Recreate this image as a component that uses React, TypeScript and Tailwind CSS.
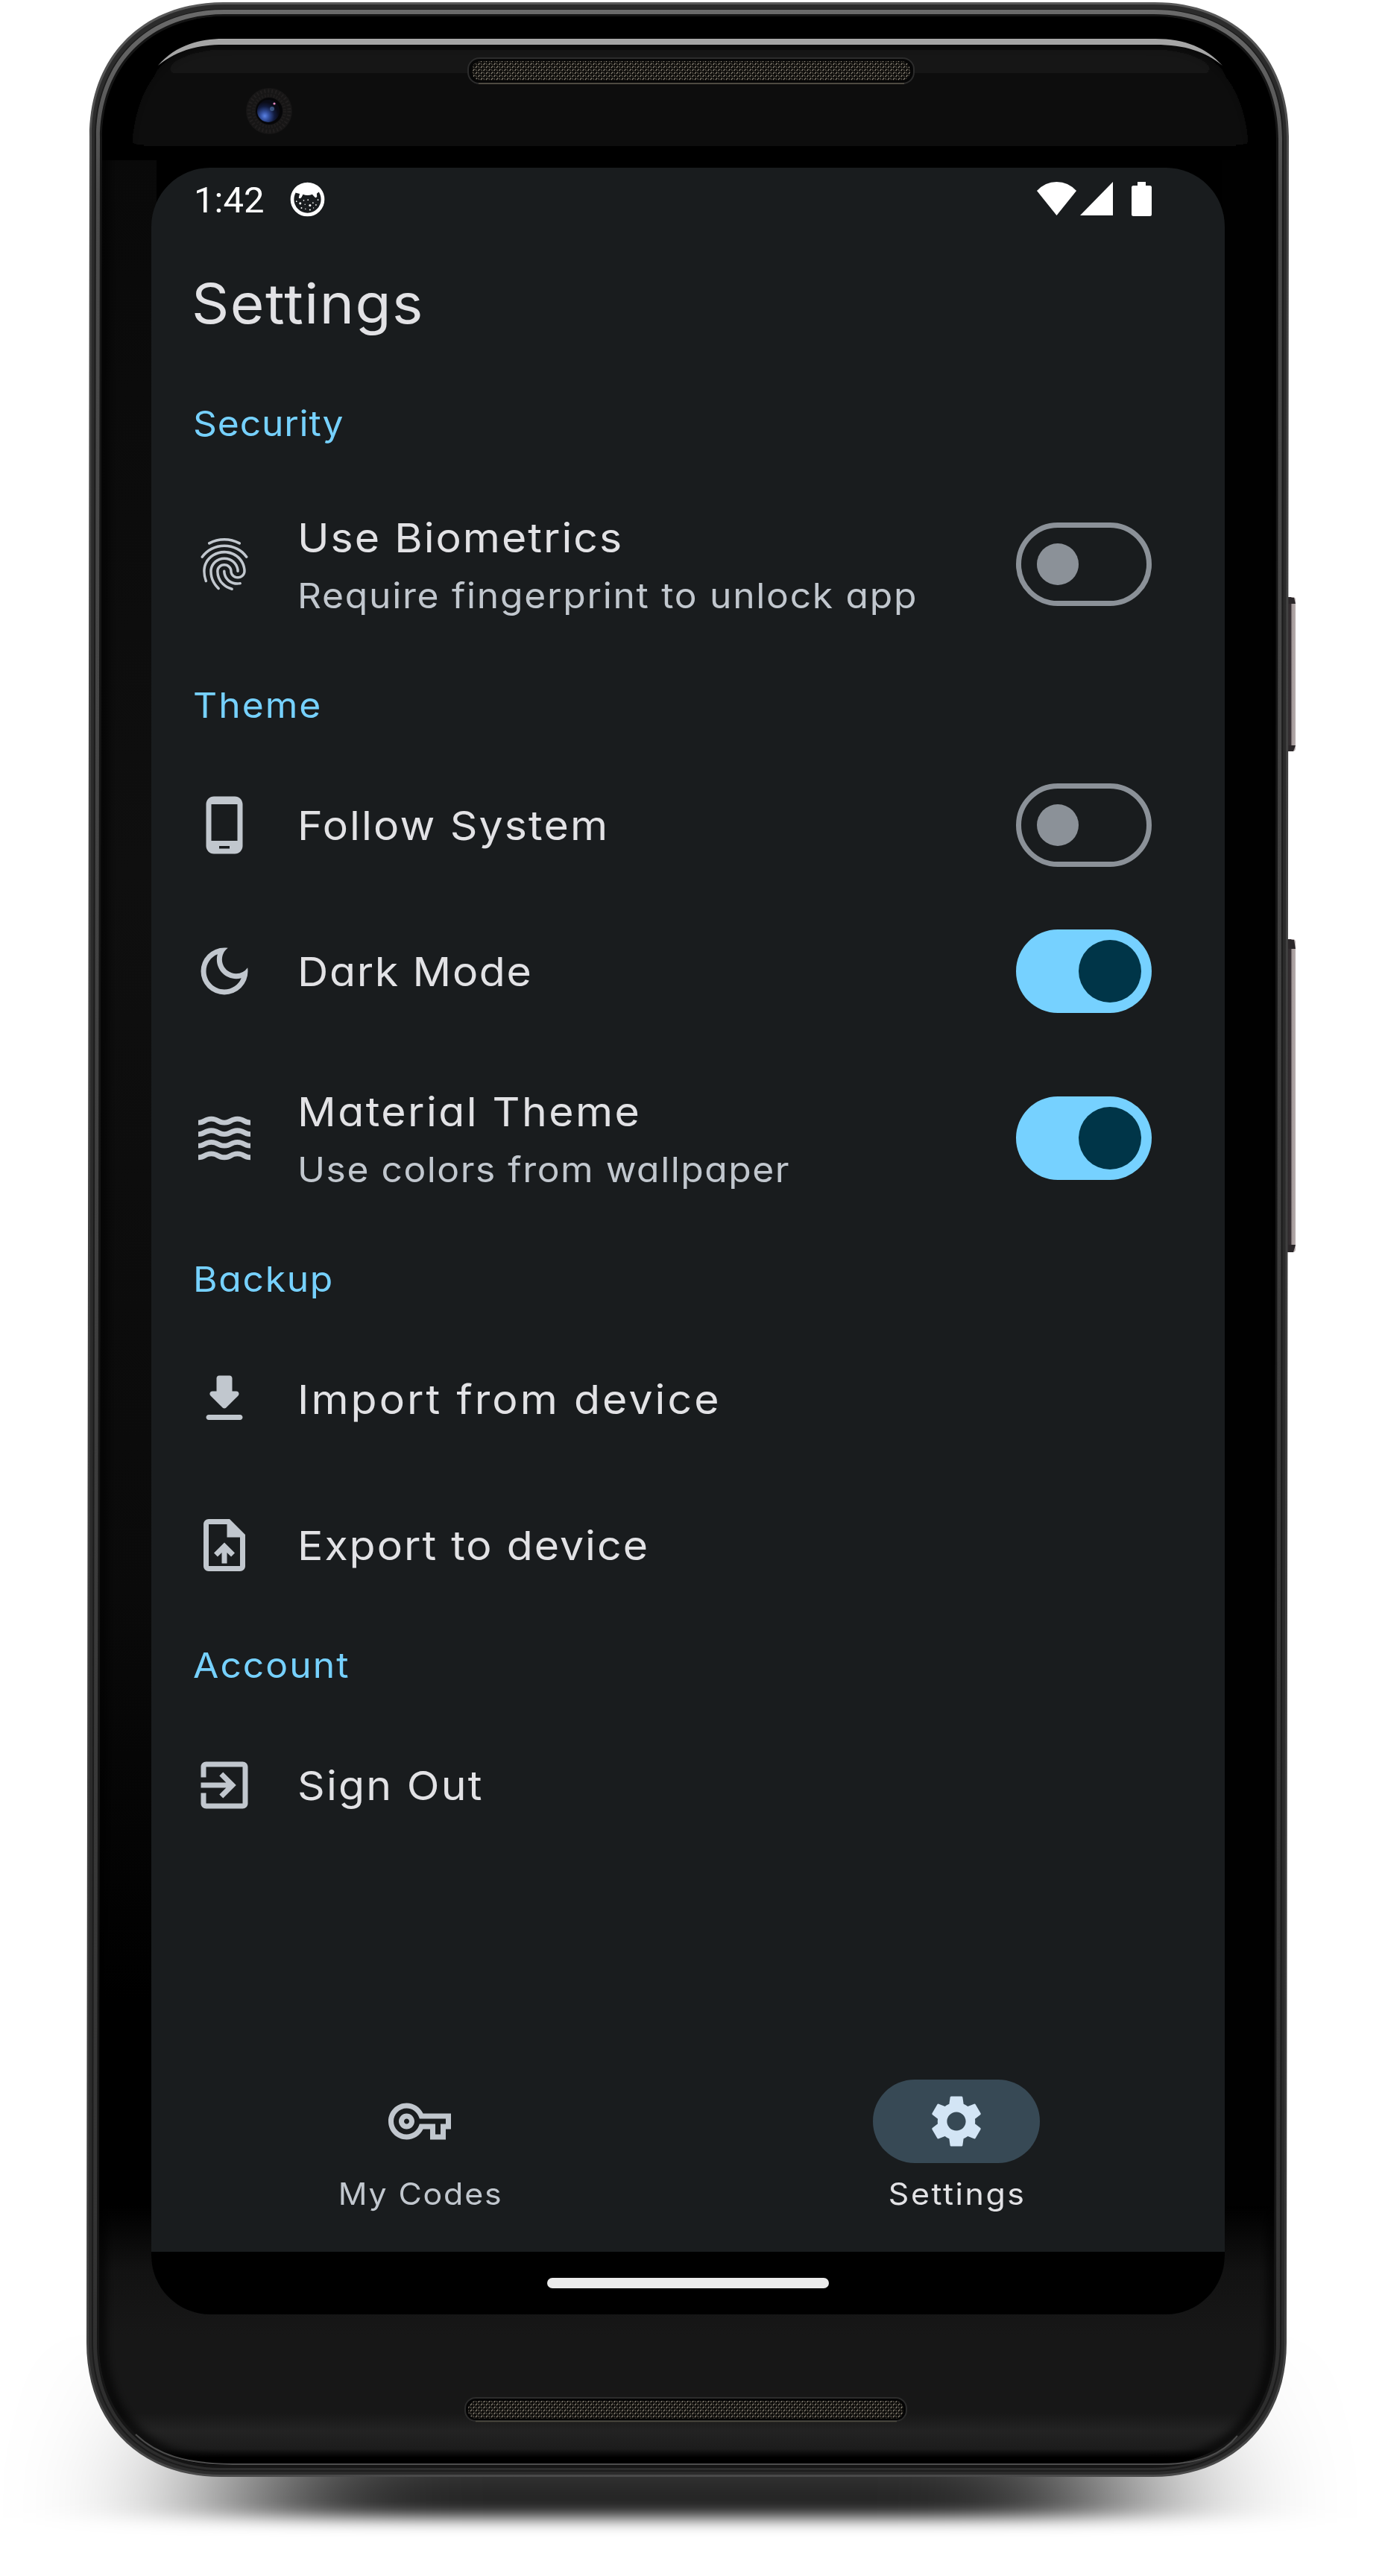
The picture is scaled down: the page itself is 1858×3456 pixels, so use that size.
import type { ReactNode } from "react";
import { MdFingerprint, MdOutlineDarkMode, MdSettings, MdWaves } from "react-icons/md";

const body = (inset: number, insetTop = inset, insetBottom = inset) => {
  const l = 120 + inset;
  const lb = 116 + inset;
  const r = 1729 - inset;
  const rb = 1726 - inset;
  const t = 3 + insetTop;
  const b = 3323 - insetBottom;
  const c = 180 - inset * 0.9;
  const k = c * 0.4;
  return `M${l} ${t + c} C${l} ${t + k} ${l + k} ${t} ${l + c} ${t} H${r - c} C${r - k} ${t} ${r} ${t + k} ${r} ${t + c} L${rb} ${b - c} C${rb} ${b - k} ${rb - k} ${b} ${rb - c} ${b} H${lb + c} C${lb + k} ${b} ${lb} ${b - k} ${lb} ${b - c} Z`;
};

function DeviceFrame() {
  return (
    <svg className="absolute inset-0" width="1858" height="3456" viewBox="0 0 1858 3456" aria-hidden="true">
      <defs>
        <filter id="ground" x="-100" y="3000" width="2100" height="456" filterUnits="userSpaceOnUse">
          <feGaussianBlur stdDeviation="135 11" />
        </filter>
        <filter id="soft" x="-20%" y="-20%" width="140%" height="140%">
          <feGaussianBlur stdDeviation="7" />
        </filter>
        <linearGradient id="groundFill" gradientUnits="userSpaceOnUse" x1="0" y1="3120" x2="0" y2="3350">
          <stop offset="0" stopColor="#000" stopOpacity="0" />
          <stop offset="0.5" stopColor="#000" stopOpacity="0.4" />
          <stop offset="0.85" stopColor="#000" stopOpacity="0.8" />
          <stop offset="1" stopColor="#000" stopOpacity="0.86" />
        </linearGradient>
        <linearGradient id="rim" gradientUnits="userSpaceOnUse" x1="0" y1="0" x2="0" y2="3323">
          <stop offset="0" stopColor="#5a5a5a" />
          <stop offset="0.1" stopColor="#444" />
          <stop offset="0.9" stopColor="#3a3a3a" />
          <stop offset="1" stopColor="#4a4a4a" />
        </linearGradient>
        <linearGradient id="texture" gradientUnits="userSpaceOnUse" x1="0" y1="0" x2="0" y2="3323">
          <stop offset="0" stopColor="#6c6c6c" />
          <stop offset="0.08" stopColor="#4a4a4a" />
          <stop offset="0.9" stopColor="#333" />
          <stop offset="1" stopColor="#2c2c2c" />
        </linearGradient>
        <linearGradient id="glassTop" gradientUnits="userSpaceOnUse" x1="0" y1="60" x2="0" y2="216">
          <stop offset="0" stopColor="#151515" />
          <stop offset="0.4" stopColor="#0f0f0f" />
          <stop offset="1" stopColor="#040404" />
        </linearGradient>
        <linearGradient id="leftStrip" gradientUnits="userSpaceOnUse" x1="0" y1="215" x2="0" y2="2960">
          <stop offset="0" stopColor="#090909" />
          <stop offset="0.35" stopColor="#0f0f0f" />
          <stop offset="0.7" stopColor="#0a0a0a" />
          <stop offset="0.9" stopColor="#000" />
        </linearGradient>
        <linearGradient id="glassBottom" gradientUnits="userSpaceOnUse" x1="0" y1="2960" x2="0" y2="3306">
          <stop offset="0" stopColor="#000" />
          <stop offset="0.25" stopColor="#121212" />
          <stop offset="0.5" stopColor="#171717" />
          <stop offset="0.8" stopColor="#171717" />
          <stop offset="0.87" stopColor="#232323" />
          <stop offset="0.94" stopColor="#1c1c1c" />
          <stop offset="0.975" stopColor="#000" />
        </linearGradient>
        <linearGradient id="button" x1="0" y1="0" x2="1" y2="0">
          <stop offset="0" stopColor="#222" />
          <stop offset="0.55" stopColor="#3a3236" />
          <stop offset="0.65" stopColor="#a39999" />
          <stop offset="1" stopColor="#b8aeae" />
        </linearGradient>
        <radialGradient id="lens" cx="0.34" cy="0.72" r="0.62">
          <stop offset="0" stopColor="#5a82e6" />
          <stop offset="0.3" stopColor="#34509e" />
          <stop offset="0.7" stopColor="#111a3c" />
          <stop offset="1" stopColor="#0a0b16" />
        </radialGradient>
        <pattern id="mesh" width="7" height="8" patternUnits="userSpaceOnUse">
          <rect width="7" height="8" fill="#0d0c0a" />
          <path d="M1 3.2 3 .6M4.6 7.2 6.4 4.6" stroke="#938c7e" strokeWidth="1.2" />
          <path d="M4.4 .8 6 3M.8 4.8 2.6 7.2" stroke="#4e4a42" strokeWidth="1.3" />
        </pattern>
        <clipPath id="glass">
          <path d={body(17, 19, 16)} />
        </clipPath>
      </defs>

      <rect x="325" y="3120" width="1175" height="258" fill="url(#groundFill)" filter="url(#ground)" />

      <rect x="1724" y="801" width="14" height="207" rx="4" fill="url(#button)" />
      <rect x="1724" y="1260" width="14" height="420" rx="4" fill="url(#button)" />
      <path d="M1728 802h8l2 8h-10zM1728 1000h10l-3 8h-7zM1728 1261h8l2 12h-10zM1728 1670h10l-3 10h-7z" fill="#2b2729" />

      <path d={body(0)} fill="url(#rim)" />
      <path d={body(3)} fill="#2b2b2b" />
      <path d={body(7, 9, 7)} fill="#1c1c1c" />
      <path d={body(9, 10, 9)} fill="url(#texture)" />
      <path d={body(14, 16, 12)} fill="#151515" />
      <path d={body(17, 19, 16)} fill="#000" />

      <g clipPath="url(#glass)">
        <path d="M176 270V200C182 120 215 62 300 62H1550C1635 62 1670 120 1676 200V270Z" fill="url(#glassTop)" filter="url(#soft)" />
        <rect x="130" y="215" width="80" height="2745" fill="url(#leftStrip)" />
        <rect x="1640" y="215" width="90" height="2745" fill="#010101" />
        <rect x="110" y="2960" width="1630" height="350" fill="url(#glassBottom)" />
        <path d={body(19, 0, 18)} fill="none" stroke="#050505" strokeWidth="10" filter="url(#soft)" />
        <rect x="260" y="20" width="1320" height="33" fill="#000" />
      </g>
      <path d="M182 3266C210 3293 250 3306 312 3306H1558C1610 3306 1640 3292 1660 3268" fill="none" stroke="#4d4d4d" strokeWidth="2" />
      <path d="M212 88C232 64 262 52 300 52H1550C1590 52 1618 64 1640 88C1616 69 1590 60 1550 60H300C262 60 236 69 212 88Z" fill="#a6a6a6" />

      <circle cx="361" cy="149" r="31" fill="#171616" />
      <circle cx="361" cy="149" r="27" fill="none" stroke="#211f1f" strokeWidth="5" strokeDasharray="2 3" />
      <circle cx="361" cy="149" r="21" fill="none" stroke="#1f1d1d" strokeWidth="4" strokeDasharray="2 2" />
      <circle cx="361" cy="149" r="18" fill="#060608" />
      <circle cx="360" cy="149" r="15" fill="url(#lens)" />
      <circle cx="365" cy="146" r="3" fill="#4a6a9a" opacity="0.7" />
      <circle cx="368" cy="139" r="1.6" fill="#e58ac0" />

      <rect x="628" y="78" width="598" height="34" rx="15" fill="#070707" stroke="#2c2c2c" strokeWidth="2" />
      <path d="M642 112H1213" stroke="#5a5548" strokeWidth="1.5" />
      <rect x="633" y="82" width="588" height="26" rx="12" fill="url(#mesh)" />
      <rect x="624" y="3217" width="592" height="31" rx="14" fill="#050505" stroke="#2c2c2c" strokeWidth="2" />
      <path d="M638 3248.500H1203" stroke="#4e4b40" strokeWidth="1.5" />
      <rect x="628" y="3221" width="584" height="24" rx="11" fill="url(#mesh)" />
    </svg>
  );
}

const Icon = ({ d }: { d: string }) => (
  <svg viewBox="0 0 24 24" className="size-[84px]" fill="currentColor" aria-hidden="true">
    <path d={d} />
  </svg>
);

const PHONE = "M16 1H8C6.34 1 5 2.34 5 4v16c0 1.66 1.34 3 3 3h8c1.66 0 3-1.34 3-3V4c0-1.66-1.34-3-3-3zm1 17H7V4h10v14zm-3 3h-4v-1h4v1z";
const DOWNLOAD = "M16.59 9H15V4c0-.55-.45-1-1-1h-4c-.55 0-1 .45-1 1v5H7.41c-.89 0-1.34 1.08-.71 1.71l4.59 4.59c.39.39 1.02.39 1.41 0l4.59-4.59c.63-.63.19-1.71-.7-1.71zM5 19c0 .55.45 1 1 1h12c.55 0 1-.45 1-1s-.45-1-1-1H6c-.55 0-1 .45-1 1z";
const UPLOAD_FILE = "M14 2H6c-1.1 0-1.99.9-1.99 2L4 20c0 1.1.89 2 1.99 2H18c1.1 0 2-.9 2-2V8l-6-6zm4 18H6V4h7v5h5v11zM8 15.01l1.41 1.41L11 14.84V19h2v-4.16l1.59 1.59L16 15.01 12.01 11z";
const SIGN_OUT = "M10.09 15.59L11.5 17l5-5-5-5-1.41 1.41L12.67 11H3v2h9.67l-2.58 2.59zM19 3H5c-1.11 0-2 .9-2 2v4h2V5h14v14H5v-4H3v4c0 1.1.89 2 2 2h14c1.1 0 2-.9 2-2V5c0-1.1-.9-2-2-2z";
const KEY = "M22 19h-6v-4h-2.68c-1.14 2.42-3.6 4-6.32 4-3.86 0-7-3.14-7-7s3.14-7 7-7c2.72 0 5.17 1.58 6.32 4H24v6h-2v4zm-4-2h2v-4h2v-2H11.94l-.23-.67C11.01 8.34 9.11 7 7 7c-2.76 0-5 2.24-5 5s2.24 5 5 5c2.11 0 4.01-1.34 4.71-3.33l.23-.67H18v4zM7 15c-1.65 0-3-1.35-3-3s1.35-3 3-3 3 1.35 3 3-1.35 3-3 3zm0-4c-.55 0-1 .45-1 1s.45 1 1 1 1-.45 1-1-.45-1-1-1z";

function StatusBar() {
  return (
    <div className="flex h-[84px] items-center pr-[98px] pl-[57px]">
      <span className="w-[98px] pt-[3px] font-['Roboto'] text-[49px] leading-[84px] whitespace-nowrap text-white">
        1:42
      </span>
      <svg viewBox="0 0 140 140" className="ml-[31px] size-[47px]" aria-hidden="true">
        <circle cx="70" cy="70" r="61" fill="none" stroke="#fff" strokeWidth="14" />
        <path d="M18 34C32 12 50 6 70 6s40 6 53 28L107 47l1 12q-5 8-11 0l-8-9Q70 57 52 50l-6 12q-6 8-11 1l4-15L24 44z" fill="#fff" />
        <g fill="#fff">
          <circle cx="41" cy="86" r="4.500" /><circle cx="80" cy="94" r="4.500" /><circle cx="55" cy="74" r="2.500" />
          <circle cx="72" cy="72" r="2.500" /><circle cx="92" cy="84" r="2.500" /><circle cx="60" cy="90" r="2" />
          <circle cx="46" cy="104" r="3" /><circle cx="62" cy="108" r="2" /><circle cx="80" cy="112" r="3" />
          <circle cx="104" cy="92" r="2.500" /><circle cx="112" cy="72" r="2.500" /><circle cx="26" cy="78" r="2.500" />
          <circle cx="94" cy="104" r="2" />
        </g>
      </svg>
      <div className="ml-auto flex h-[46px] items-start">
        <svg viewBox="0 0 53 45" className="h-[45px] w-[53px]" fill="#fff" aria-hidden="true">
          <path d="M26.500 45 0 12Q11 0 26.500 0T53 12Z" />
        </svg>
        <svg viewBox="0 0 44 45" className="ml-[5px] h-[45px] w-[44px]" fill="#fff" aria-hidden="true">
          <path d="M44 0V45H0Z" />
        </svg>
        <svg viewBox="0 0 27 46" className="ml-[25px] h-[46px] w-[27px]" fill="#fff" aria-hidden="true">
          <path d="M8 0H19V5H24.500Q27 5 27 7.500V43.500Q27 46 24.500 46H2.500Q0 46 0 43.500V7.500Q0 5 2.500 5H8Z" />
        </svg>
      </div>
    </div>
  );
}

function Switch({ on }: { on: boolean }) {
  return on ? (
    <div className="flex h-[112px] w-[182px] items-center justify-end rounded-full bg-[#76d1ff] pr-3.5">
      <div className="size-[84px] rounded-full bg-[#003548]" />
    </div>
  ) : (
    <div className="flex h-[112px] w-[182px] items-center rounded-full border-7 border-[#8b9198] pl-[21px]">
      <div className="size-14 rounded-full bg-[#8b9198]" />
    </div>
  );
}

function Section({ title, tracking, children }: { title: string; tracking: string; children: ReactNode }) {
  return (
    <section>
      <h2
        className={`ml-14 h-[126px] w-fit origin-left scale-x-106 text-[47px] leading-[126px] font-normal text-[#76d1ff] ${tracking}`}
      >
        {title}
      </h2>
      {children}
    </section>
  );
}

interface RowProps {
  icon: ReactNode;
  title: string;
  tracking: string;
  summary?: string;
  summaryTracking?: string;
  on?: boolean;
}

function Row({ icon, title, tracking, summary, summaryTracking = "", on }: RowProps) {
  return (
    <div className={`flex items-center pr-[98px] pl-14 ${summary ? "h-[252px]" : "h-[196px]"}`}>
      <div className="w-[140px] text-[#c1c7ce]">{icon}</div>
      <div className="flex-1 whitespace-nowrap">
        <div
          className={`w-fit origin-left scale-x-106 text-[54px] leading-[84px] text-[#e2e2e5] ${tracking} ${summary ? "" : "pt-0.5"}`}
        >
          {title}
        </div>
        {summary && (
          <div className={`w-fit origin-left scale-x-106 text-[47px] leading-[70px] text-[#c1c7ce] ${summaryTracking}`}>
            {summary}
          </div>
        )}
      </div>
      {on !== undefined && <Switch on={on} />}
    </div>
  );
}

export default function App() {
  return (
    <div className="relative h-[3456px] w-[1858px] overflow-hidden bg-white pt-[225px] pl-[203px]">
      <DeviceFrame />
      <div className="relative flex h-[2880px] w-[1440px] flex-col overflow-hidden rounded-[79px] bg-[#191c1e] font-['Inter',sans-serif] [font-feature-settings:'cv11']">
        <StatusBar />
        <h1 className="ml-[54px] h-[196px] w-fit origin-left scale-x-106 text-[74px] leading-[196px] font-normal tracking-[1.37px] text-[#e2e2e5]">
          Settings
        </h1>

        <main className="flex-1">
          <Section title="Security" tracking="tracking-[0.78px]">
            <Row
              icon={<MdFingerprint className="size-[84px]" />}
              title="Use Biometrics"
              tracking="tracking-[1.87px]"
              summary="Require fingerprint to unlock app"
              summaryTracking="tracking-[1.6px]"
              on={false}
            />
          </Section>
          <Section title="Theme" tracking="tracking-[1.9px]">
            <Row icon={<Icon d={PHONE} />} title="Follow System" tracking="tracking-[2px]" on={false} />
            <Row icon={<MdOutlineDarkMode className="size-[84px]" />} title="Dark Mode" tracking="tracking-[1.55px]" on />
            <Row
              icon={<MdWaves className="size-[84px]" />}
              title="Material Theme"
              tracking="tracking-[2.3px]"
              summary="Use colors from wallpaper"
              summaryTracking="tracking-[1.42px]"
              on
            />
          </Section>
          <Section title="Backup" tracking="tracking-[1.6px]">
            <Row icon={<Icon d={DOWNLOAD} />} title="Import from device" tracking="tracking-[2.87px]" />
            <Row icon={<Icon d={UPLOAD_FILE} />} title="Export to device" tracking="tracking-[1.87px]" />
          </Section>
          <Section title="Account" tracking="tracking-[1.9px]">
            <Row icon={<Icon d={SIGN_OUT} />} title="Sign Out" tracking="tracking-[2.1px]" />
          </Section>
        </main>

        <nav className="grid h-[280px] grid-cols-2 pt-[49px]">
          <div className="flex flex-col items-center text-[#c1c7ce]">
            <div className="flex h-[112px] w-[224px] items-center justify-center">
              <Icon d={KEY} />
            </div>
            <span className="mt-[13px] scale-x-106 pl-0.5 text-[40.5px] leading-[57px] tracking-[1.7px]">My Codes</span>
          </div>
          <div className="flex flex-col items-center text-[#e2e2e5]">
            <div className="flex h-[112px] w-[224px] items-center justify-center rounded-full bg-[#374955]">
              <MdSettings className="size-[84px] text-[#d3e5f5]" />
            </div>
            <span className="mt-[13px] scale-x-106 pl-0.5 text-[40.5px] leading-[57px] tracking-[2.4px]">Settings</span>
          </div>
        </nav>
        <div className="flex h-[84px] items-center justify-center bg-black">
          <div className="h-3.5 w-[378px] rounded-[7px] bg-[#ebebeb]" />
        </div>
      </div>
    </div>
  );
}
